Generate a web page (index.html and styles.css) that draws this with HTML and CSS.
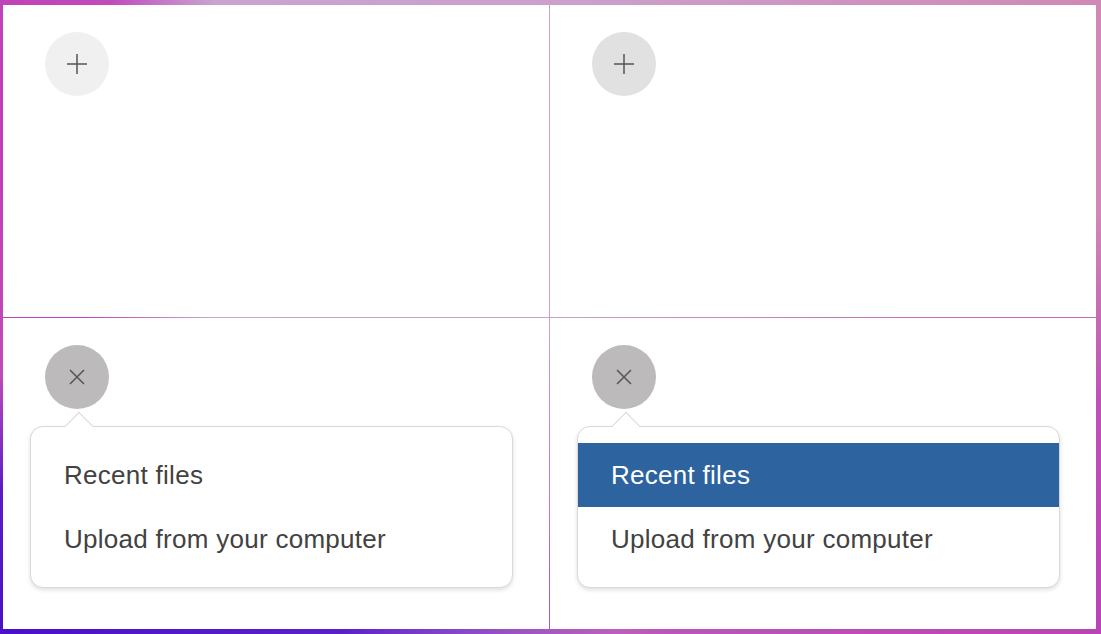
FILE: index.html
```html
<!DOCTYPE html>
<html lang="en">
<head>
<meta charset="utf-8">
<title>Add menu states</title>
<link rel="stylesheet" href="styles.css">
</head>
<body>
<div class="grid">
  <div class="cell">
    <button class="fab fab-idle" aria-label="Add">
      <svg width="22" height="22" viewBox="0 0 22 22"><path d="M11 1v20M1 11h20" stroke="#555" stroke-width="1.5" fill="none"/></svg>
    </button>
  </div>
  <div class="cell">
    <button class="fab fab-hover" aria-label="Add">
      <svg width="22" height="22" viewBox="0 0 22 22"><path d="M11 1v20M1 11h20" stroke="#555" stroke-width="1.5" fill="none"/></svg>
    </button>
  </div>
  <div class="cell">
    <button class="fab fab-open" aria-label="Close">
      <svg width="18" height="18" viewBox="0 0 18 18"><path d="M2 2l14 14M16 2L2 16" stroke="#555" stroke-width="1.5" fill="none"/></svg>
    </button>
    <div class="popover">
      <span class="arrow"></span>
      <div class="item">Recent files</div>
      <div class="item">Upload from your computer</div>
    </div>
  </div>
  <div class="cell">
    <button class="fab fab-open" aria-label="Close">
      <svg width="18" height="18" viewBox="0 0 18 18"><path d="M2 2l14 14M16 2L2 16" stroke="#555" stroke-width="1.5" fill="none"/></svg>
    </button>
    <div class="popover">
      <span class="arrow"></span>
      <div class="item item-active">Recent files</div>
      <div class="item">Upload from your computer</div>
    </div>
  </div>
</div>
</body>
</html>
```
FILE: styles.css
```css
html, body {
  margin: 0;
  height: 634px;
  overflow: hidden;
}
body {
  box-sizing: border-box;
  padding: 5px 5px 5px 3px;
  font-family: "Liberation Sans", Arial, Helvetica, sans-serif;
  background:
    radial-gradient(ellipse 620px 260px at 0% 100%, #4a10c8 0%, rgba(80,18,198,0.9) 55%, rgba(120,40,190,0) 100%),
    radial-gradient(ellipse 220px 560px at 0% 20%, #c03cb8 0%, rgba(192,60,184,0.85) 55%, rgba(192,60,184,0) 100%),
    radial-gradient(ellipse 800px 420px at 100% 100%, #b844b6 0%, rgba(184,68,182,0.8) 55%, rgba(184,68,182,0) 100%),
    linear-gradient(90deg, #c8a6d4 0%, #cc9ecb 55%, #d088b4 100%);
}
.grid {
  display: grid;
  grid-template-columns: 1fr 1fr;
  grid-template-rows: 312px 311px;
  gap: 1px;
  height: 624px;
}
.cell {
  background: #fff;
  padding-top: 27px;
  display: flex;
  flex-direction: column;
  align-items: flex-start;
}
.fab {
  width: 64px;
  height: 64px;
  border-radius: 50%;
  border: none;
  padding: 0;
  margin-left: 42px;
  display: flex;
  align-items: center;
  justify-content: center;
  flex-shrink: 0;
}
.fab-idle { background: #f0f0f0; }
.fab-hover { background: #e1e1e1; }
.fab-open { background: #bcbabb; }
.popover {
  position: relative;
  box-sizing: border-box;
  width: 483px;
  margin-top: 17px;
  margin-left: 27px;
  padding: 16px 0;
  background: #fff;
  border: 1px solid #d9d9d9;
  border-radius: 13px;
  box-shadow: 0 2px 4px rgba(0, 0, 0, 0.13);
}
.arrow {
  position: absolute;
  top: -11px;
  left: 38px;
  width: 20px;
  height: 20px;
  background: #fff;
  border-top: 1px solid #d9d9d9;
  border-left: 1px solid #d9d9d9;
  transform: rotate(45deg);
  box-sizing: border-box;
}
.item {
  position: relative;
  height: 64px;
  padding-left: 33px;
  display: flex;
  align-items: center;
  font-size: 26px;
  letter-spacing: 0.28px;
  color: #424242;
}
.item-active {
  background: #2d639e;
  color: #fff;
}
```
